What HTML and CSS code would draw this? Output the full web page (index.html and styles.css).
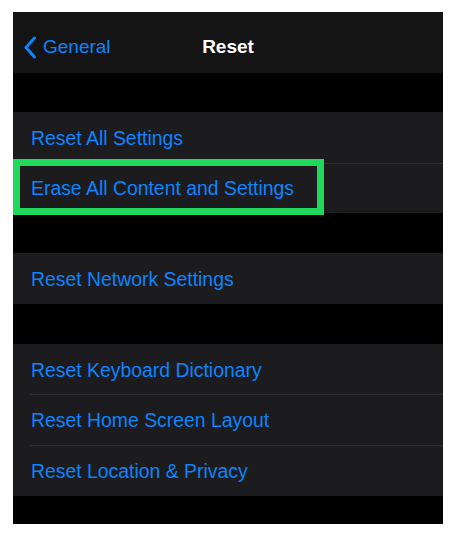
FILE: index.html
```html
<!DOCTYPE html>
<html lang="en">
<head>
  <meta charset="UTF-8">
  <meta name="viewport" content="width=device-width, initial-scale=1.0">
  <title>Reset</title>
  <link rel="stylesheet" href="styles.css">
</head>
<body>
  <div class="phone">
    <header class="nav-bar">
      <a href="#" class="back-link">
        <svg class="chevron" width="14" height="23" viewBox="0 0 14 23">
          <path d="M11.5 2 L3 11.5 L11.5 21" fill="none" stroke="#0a84ff" stroke-width="3" stroke-linecap="round" stroke-linejoin="round"/>
        </svg>
        <span>General</span>
      </a>
      <h1>Reset</h1>
    </header>

    <div class="spacer first"></div>
    <ul class="group">
      <li><a href="#">Reset All Settings</a></li>
      <li class="highlighted">
        <a href="#">Erase All Content and Settings</a>
        <div class="highlight-box"></div>
      </li>
    </ul>

    <div class="spacer"></div>
    <ul class="group">
      <li><a href="#">Reset Network Settings</a></li>
    </ul>

    <div class="spacer"></div>
    <ul class="group">
      <li><a href="#">Reset Keyboard Dictionary</a></li>
      <li><a href="#">Reset Home Screen Layout</a></li>
      <li><a href="#">Reset Location &amp; Privacy</a></li>
    </ul>
  </div>
</body>
</html>
```

FILE: styles.css
```css
/* Global Styles */
* {
  margin: 0;
  padding: 0;
  box-sizing: border-box;
  font-family: 'Liberation Sans', Arial, sans-serif;
}

body {
  background-color: #ffffff;
  padding: 12px 0 0 13px;
}

.phone {
  width: 430px;
  height: 512px;
  background-color: #000000;
  overflow: hidden;
}

/* Navigation Bar */
.nav-bar {
  height: 61px;
  padding-top: 9px;
  background-color: #141414;
  display: flex;
  align-items: center;
  justify-content: center;
  position: relative;
}

.nav-bar h1 {
  color: #ffffff;
  font-size: 19px;
  font-weight: bold;
}

.back-link {
  position: absolute;
  left: 10px;
  top: 9px;
  bottom: 0;
  display: flex;
  align-items: center;
  gap: 6px;
  text-decoration: none;
  color: #0a84ff;
  font-size: 19px;
}

.chevron {
  display: block;
  margin-top: 1px;
}

/* Settings Groups */
.spacer {
  height: 40px;
}

.spacer.first {
  height: 39px;
}

.group {
  list-style: none;
  background-color: #1c1c1e;
}

.group li {
  position: relative;
  height: 50.6px;
  padding: 2px 0 0 18px;
  display: flex;
  align-items: center;
}

.group li + li::before {
  content: "";
  position: absolute;
  top: 0;
  left: 17px;
  right: 0;
  height: 1px;
  background-color: #2e2e30;
}

.group a {
  color: #0a84ff;
  font-size: 19.4px;
  text-decoration: none;
}

/* Annotation */
.highlight-box {
  position: absolute;
  left: 0;
  top: -4px;
  width: 311px;
  height: 56px;
  border: 7px solid #1fd85c;
}
```
